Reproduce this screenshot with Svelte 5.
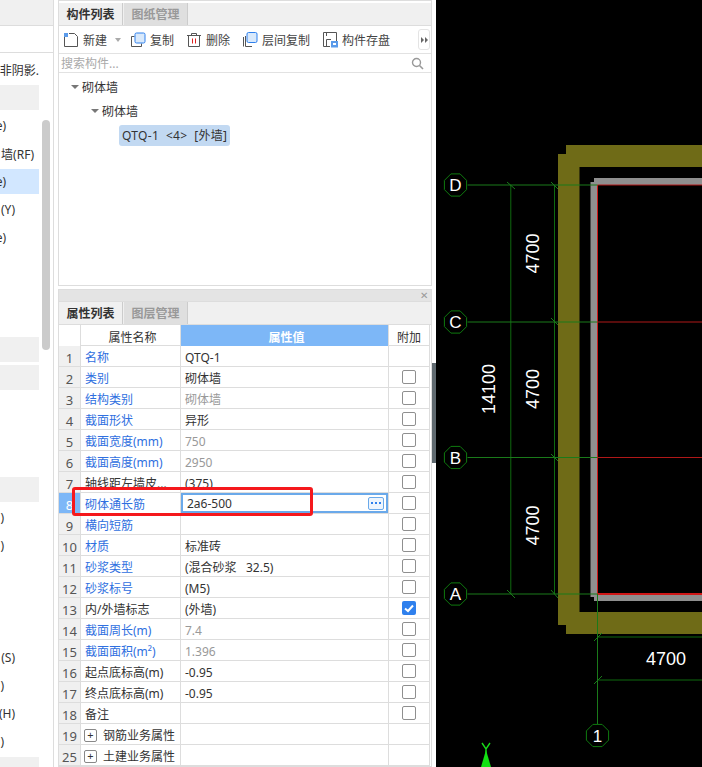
<script>
  const sideRows = [
    { k: 0, text: '非阴影.', pad: 0 },
    { k: 1, cls: 'stripe' },
    { k: 2, text: 'e)', pad: 33 },
    { k: 3, text: '墙(RF)', pad: 5 },
    { k: 4, text: 'e)', pad: 33, cls: 'picked' },
    { k: 5, text: '(Y)', pad: 24 },
    { k: 6, text: 'e)', pad: 33 },
    { k: 7 }, { k: 8 }, { k: 9 },
    { k: 10, cls: 'stripe' },
    { k: 11, cls: 'stripe' },
    { k: 12 }, { k: 13 }, { k: 14 },
    { k: 15, cls: 'stripe' },
    { k: 16, text: ')', pad: 35 },
    { k: 17, text: ')', pad: 35 },
    { k: 18 }, { k: 19 }, { k: 20 },
    { k: 21, text: '(S)', pad: 24 },
    { k: 22, text: ')', pad: 35 },
    { k: 23, text: '(H)', pad: 24 },
    { k: 24, text: ')', pad: 35 },
    { k: 25, cls: 'stripe' }
  ];

  const props = [
    { n: 1, name: '名称', blue: true, value: 'QTQ-1', noCheck: true },
    { n: 2, name: '类别', blue: true, value: '砌体墙' },
    { n: 3, name: '结构类别', blue: true, value: '砌体墙', grey: true },
    { n: 4, name: '截面形状', blue: true, value: '异形' },
    { n: 5, name: '截面宽度(mm)', blue: true, value: '750', grey: true },
    { n: 6, name: '截面高度(mm)', blue: true, value: '2950', grey: true },
    { n: 7, name: '轴线距左墙皮...', value: '(375)' },
    { n: 8, name: '砌体通长筋', blue: true, value: '2a6-500', editing: true },
    { n: 9, name: '横向短筋', blue: true, value: '' },
    { n: 10, name: '材质', blue: true, value: '标准砖' },
    { n: 11, name: '砂浆类型', blue: true, value: '(混合砂浆\u00a0\u00a0\u00a032.5)' },
    { n: 12, name: '砂浆标号', blue: true, value: '(M5)' },
    { n: 13, name: '内/外墙标志', value: '(外墙)', checked: true },
    { n: 14, name: '截面周长(m)', blue: true, value: '7.4', grey: true },
    { n: 15, name: '截面面积(m²)', blue: true, value: '1.396', grey: true },
    { n: 16, name: '起点底标高(m)', value: '-0.95' },
    { n: 17, name: '终点底标高(m)', value: '-0.95' },
    { n: 18, name: '备注', value: '' },
    { n: 19, name: '钢筋业务属性', group: true, noCheck: true },
    { n: 25, name: '土建业务属性', group: true, noCheck: true }
  ];

  const axes = [
    { id: 'D', y: 185 },
    { id: 'C', y: 322 },
    { id: 'B', y: 457.5 },
    { id: 'A', y: 594 }
  ];

  function octagon(cx, cy, r) {
    const pts = [];
    for (let i = 0; i < 8; i++) {
      const a = (Math.PI / 4) * i + Math.PI / 8;
      pts.push((cx + r * Math.cos(a)).toFixed(1) + ',' + (cy + r * Math.sin(a)).toFixed(1));
    }
    return pts.join(' ');
  }
</script>

<div class="page">
  <aside class="side">
    <div class="side-head"></div>
    <div class="side-bar"></div>
    <div class="side-list">
      {#each sideRows as row (row.k)}
        <div class="side-row {row.cls || ''}" style={row.text ? `padding-right:${row.pad}px` : ''}>{row.text || ''}</div>
      {/each}
    </div>
    <div class="side-scroll"></div>
  </aside>

  <main class="panels">
    <section class="panel list-panel">
      <div class="tabs">
        <div class="tab on">构件列表</div>
        <div class="tab">图纸管理</div>
      </div>
      <div class="toolbar">
        <span class="tool first">
          <svg width="16" height="16" viewBox="0 0 16 16"><path d="M1.5 3.5V14.5H14.5V4.5L11.5 1.5H6" fill="none" stroke="#555" /><rect x="1" y="1" width="4" height="4" fill="#5b9bea" /></svg>
          新建
          <i class="caret"></i>
        </span>
        <span class="tool">
          <svg width="16" height="16" viewBox="0 0 16 16"><path d="M4.5 4.5H1.5V14.5H11.5V11.5" fill="none" stroke="#555" /><rect x="5" y="1" width="10" height="10" rx="1.5" fill="#d9e9fb" stroke="#2f80ed" /></svg>
          复制
        </span>
        <span class="tool">
          <svg width="16" height="16" viewBox="0 0 16 16"><path d="M1 3.5H15M5.5 3V1.5H10.5V3M2.5 3.5V14.5H13.5V3.5" fill="none" stroke="#555" /><path d="M6.5 6.5V11.5M9.5 6.5V11.5" stroke="#e02020" /></svg>
          删除
        </span>
        <span class="tool">
          <svg width="16" height="16" viewBox="0 0 16 16"><path d="M1.5 5V14.5M3.5 4V14.5H10" fill="none" stroke="#555" /><rect x="5" y="0.5" width="10" height="10" rx="1.5" fill="#d9e9fb" stroke="#2f80ed" /></svg>
          层间复制
        </span>
        <span class="tool">
          <svg width="16" height="16" viewBox="0 0 16 16"><path d="M8 14.5H1.5V0.5H14.5V9M4.5 14V7.5H9M4.5 1V4" fill="none" stroke="#555" /><rect x="9" y="9" width="7" height="6.5" fill="#5b9bea" /><rect x="11" y="11" width="3" height="2" fill="#fff" /></svg>
          构件存盘
        </span>
        <span class="more"><i></i><i></i></span>
      </div>
      <div class="search">
        <span>搜索构件...</span>
        <svg width="13" height="13" viewBox="0 0 13 13"><circle cx="5.5" cy="5.5" r="4" fill="none" stroke="#999" stroke-width="1.4" /><path d="M8.5 8.5L12 12" stroke="#999" stroke-width="1.6" /></svg>
      </div>
      <div class="tree">
        <div class="node"><i class="caret dark"></i>砌体墙</div>
        <div class="node lvl2"><i class="caret dark"></i>砌体墙</div>
        <div class="node lvl3"><span class="leaf">QTQ-1&nbsp;&nbsp;&lt;4&gt;&nbsp;&nbsp;[外墙]</span></div>
      </div>
    </section>

    <section class="panel prop-panel">
      <div class="prop-title"><span class="close">✕</span></div>
      <div class="tabs">
        <div class="tab on">属性列表</div>
        <div class="tab">图层管理</div>
      </div>
      <div class="table">
        <div class="tr head">
          <div class="idx blank"></div>
          <div class="name">属性名称</div>
          <div class="val">属性值</div>
          <div class="add">附加</div>
        </div>
        {#each props as p (p.n)}
          <div class="tr" class:editing={p.editing}>
            <div class="idx">{p.n}</div>
            <div class="name" class:blue={p.blue}>
              {#if p.group}<span class="plus">+</span>{/if}{p.name}
            </div>
            <div class="val" class:grey={p.grey}>
              {#if p.editing}
                <span class="input"><span class="input-text">{p.value}</span>
                  <span class="dots">
                    <svg width="14" height="11" viewBox="0 0 14 11"><path d="M2 4h2v2H2zM6 4h2v2H6zM10 4h2v2h-2z" fill="#2f80ed" /></svg>
                  </span>
                </span>
              {:else}
                {p.value || ''}
              {/if}
            </div>
            <div class="add">
              {#if !p.noCheck}
                <span class="check" class:checked={p.checked}>
                  {#if p.checked}
                    <svg width="14" height="14" viewBox="0 0 14 14"><path d="M3 7.5L6 10L11 4.5" fill="none" stroke="#fff" stroke-width="2" /></svg>
                  {/if}
                </span>
              {/if}
            </div>
          </div>
        {/each}
        <div class="red-box"></div>
      </div>
    </section>
  </main>

  <div class="splitter"><div class="handle"></div></div>

  <svg class="cad" width="266" height="767" viewBox="436 0 266 767">
    <path d="M566 145H702V167H579.5V612H702V634H566V625H558V154H566Z" fill="#6f6b17" />
    <path d="M594 178H702V185H597.5V594H702V601H594V597H590.5V182H594Z" fill="#8f8f8f" />
    <path d="M597.5 185V594" stroke="#d01818" stroke-width="1" />
    <path d="M597.5 185H702M597.5 322H702M597.5 457.5H702" stroke="#b01818" stroke-width="1" />
    <path d="M597.5 594H702" stroke="#d01818" stroke-width="2" />

    <path d="M510.8 185V594M554.5 185V594M597.5 637H702M597.5 680H702" stroke="#0f6a0f" stroke-width="1" />
    <path d="M507 182L515 189M551 182L558 189M551 318L558 325M551 454L558 461M507 590L515 598M551 590L558 598M594 641L602 633M594 684L602 676" stroke="#1a7a1a" stroke-width="1" />

    {#each axes as a (a.id)}
      <path d="M467.5 {a.y}H597.5" stroke="#1a7a1a" stroke-width="1" />
      <polygon points={octagon(455.5, a.y, 12)} fill="none" stroke="#0f7a0f" />
      <text class="axis-id" x="455.5" y={a.y + 6}>{a.id}</text>
    {/each}
    <path d="M597.5 594V724" stroke="#1a7a1a" stroke-width="1" />
    <polygon points={octagon(597.5, 735.5, 12)} fill="none" stroke="#0f7a0f" />
    <text class="axis-id" x="597.5" y="741.5">1</text>

    <text class="dim" transform="translate(539 253.5) rotate(-90)">4700</text>
    <text class="dim" transform="translate(539 389) rotate(-90)">4700</text>
    <text class="dim" transform="translate(539 525.5) rotate(-90)">4700</text>
    <text class="dim" transform="translate(495 389) rotate(-90)">14100</text>
    <text class="dim" x="666" y="665">4700</text>

    <path d="M482 743L486 749L490 743M486 749V756" fill="none" stroke="#18d818" stroke-width="1.4" />
    <polygon points="486,750 491,767 481,767" fill="#12e012" />
  </svg>
</div>

<style>
  :global(body) {
    margin: 0;
    background: #fff;
  }

  .page {
    display: flex;
    width: 702px;
    height: 767px;
    overflow: hidden;
    font-family: "Noto Sans", "Noto Sans CJK SC", sans-serif;
    font-size: 12px;
    color: #333;
    background: #fff;
  }

  /* left list, cut off by the window edge */
  .side {
    position: relative;
    flex: none;
    width: 53px;
    border-right: 1px solid #ddd;
  }

  .side-head {
    height: 25px;
    background: #f0f0f0;
    border-bottom: 1px solid #ddd;
  }

  .side-bar {
    height: 26px;
    border-bottom: 1px solid #ddd;
  }

  .side-list {
    display: flex;
    flex-direction: column;
    gap: 3px;
    width: 39px;
    margin-top: 4px;
  }

  .side-row {
    display: flex;
    flex: none;
    justify-content: flex-end;
    align-items: center;
    height: 25px;
    overflow: hidden;
    white-space: nowrap;
  }

  .stripe {
    background: #f0f0f0;
  }

  .picked {
    background: #d2e7ff;
  }

  .side-scroll {
    position: absolute;
    left: 42px;
    top: 120px;
    width: 8px;
    height: 230px;
    border-radius: 4px;
    background: #cbcbcb;
  }

  .panels {
    display: flex;
    flex: none;
    flex-direction: column;
    gap: 3px;
    width: 374px;
    margin-left: 4px;
  }

  .panel {
    border: 1px solid #ddd;
    border-top: 0;
    box-sizing: border-box;
  }

  .list-panel {
    height: 288px;
    padding-top: 2px;
    border-top: 1px solid #ddd;
  }

  .tabs {
    display: flex;
    height: 23px;
    box-sizing: border-box;
    background: #f0f0f0;
    border-bottom: 1px solid #ddd;
  }

  .tab {
    width: 64px;
    height: 22px;
    margin-right: 1px;
    line-height: 24px;
    text-align: center;
    font-weight: 700;
    color: #999;
    background: #dfdfdf;
    border-right: 1px solid #ccc;
    box-sizing: border-box;
  }

  .tab.on {
    color: #333;
    background: #f0f0f0;
  }

  .toolbar {
    display: flex;
    align-items: center;
    height: 28px;
    box-sizing: border-box;
    padding-left: 4px;
    border-bottom: 1px solid #e2e2e2;
    color: #444;
    position: relative;
  }

  .tool {
    display: flex;
    align-items: center;
    gap: 4px;
    margin-right: 12px;
    white-space: nowrap;
  }

  .tool.first {
    margin-right: 9px;
  }

  .caret {
    display: inline-block;
    width: 0;
    height: 0;
    margin-left: 4px;
    border: 3px solid transparent;
    border-top: 4px solid #aaa;
    border-bottom: 0;
  }

  .caret.dark {
    margin: 0 3px 0 0;
    border-left-width: 4px;
    border-right-width: 4px;
    border-top-color: #777;
  }

  .more {
    position: absolute;
    right: 1px;
    top: 3px;
    display: flex;
    align-items: center;
    justify-content: center;
    gap: 1px;
    width: 10px;
    height: 19px;
    border: 1px solid #e4e4e4;
    border-radius: 3px;
    background: #fff;
  }

  .more i {
    width: 0;
    height: 0;
    border: 3px solid transparent;
    border-left: 3px solid #666;
    border-right: 0;
  }

  .search {
    display: flex;
    align-items: center;
    justify-content: space-between;
    height: 19px;
    box-sizing: border-box;
    padding: 0 7px 0 2px;
    border-bottom: 1px solid #e2e2e2;
    color: #aaa;
  }

  .tree {
    padding-top: 2px;
  }

  .node {
    display: flex;
    align-items: center;
    height: 24px;
    padding-left: 12px;
  }

  .lvl2 {
    padding-left: 32px;
  }

  .lvl3 {
    padding-left: 60px;
  }

  .leaf {
    height: 21px;
    padding: 0 3px;
    line-height: 21px;
    letter-spacing: 0.3px;
    border-radius: 3px;
    background: #c2d9f2;
    white-space: nowrap;
  }

  .prop-panel {
    position: relative;
    flex: 1;
    border-top: 1px solid #ddd;
  }

  .prop-title {
    position: relative;
    height: 11px;
    background: #e4e4e4;
    border-bottom: 1px solid #ddd;
  }

  .close {
    position: absolute;
    right: 3px;
    top: -2px;
    font-size: 10px;
    line-height: 14px;
    color: #999;
  }

  .table {
    position: relative;
    width: 371px;
  }

  .tr {
    display: grid;
    grid-template-columns: 22px 100px 208px 41px;
    height: 21px;
    box-sizing: border-box;
    border-bottom: 1px solid #ddd;
    line-height: 24px;
  }

  .tr > div {
    white-space: nowrap;
    overflow: hidden;
  }

  .idx {
    text-align: center;
    color: #555;
    background: #f0f0f0;
    border-right: 1px solid #ddd;
    font-size: 13px;
  }

  .idx.blank {
    background: #fff;
  }

  .editing .idx {
    color: #fff;
    background: #7db7f7;
  }

  .name {
    padding-left: 4px;
    border-right: 1px solid #ddd;
  }

  .blue {
    color: #2f6fe0;
  }

  .val {
    padding-left: 4px;
    border-right: 1px solid #ddd;
  }

  .grey {
    color: #999;
  }

  .add {
    text-align: center;
    border-right: 1px solid #ddd;
  }

  .head {
    height: 21px;
    border-bottom: 0;
    line-height: 25px;
  }

  .head .name {
    text-align: center;
    border-bottom: 1px solid #ddd;
  }

  .head .val {
    text-align: center;
    font-weight: 700;
    color: #fff;
    background: #7db7f7;
  }

  .head .add {
    border-bottom: 1px solid #ddd;
  }

  .editing .val {
    padding: 0;
  }

  .input {
    display: flex;
    align-items: center;
    justify-content: space-between;
    height: 20px;
    padding: 0 2px 0 4px;
    box-sizing: border-box;
    border: 2px solid #6aa9ea;
    color: #333;
  }

  .input-text {
    position: relative;
    top: 1px;
    line-height: 16px;
  }

  .dots {
    display: block;
    width: 14px;
    height: 11px;
    border: 1px solid #6aa9ea;
    border-radius: 2px;
    background: #eef5fd;
  }

  .dots svg {
    display: block;
  }

  .check {
    display: inline-block;
    width: 14px;
    height: 14px;
    margin-top: 3px;
    box-sizing: border-box;
    border: 1px solid #8f8f8f;
    border-radius: 2px;
    background: #fff;
    vertical-align: top;
  }

  .check.checked {
    border: 0;
    background: #2f80ed;
  }

  .check svg {
    display: block;
  }

  .plus {
    display: inline-block;
    width: 11px;
    height: 11px;
    margin: 0 6px 0 -1px;
    line-height: 10px;
    text-align: center;
    font-size: 11px;
    border: 1px solid #888;
    border-radius: 2px;
    vertical-align: 1px;
  }

  .red-box {
    position: absolute;
    left: 13px;
    top: 162px;
    width: 241px;
    height: 29px;
    box-sizing: border-box;
    border: 3px solid #f5181c;
    border-radius: 3px;
  }

  .splitter {
    position: relative;
    flex: none;
    width: 4px;
  }

  .handle {
    position: absolute;
    left: 0;
    top: 363px;
    width: 4px;
    height: 100px;
    background: #606a70;
  }

  .cad {
    display: block;
    flex: none;
    background: #000;
  }

  .axis-id {
    font-family: "Liberation Sans", sans-serif;
    font-size: 17px;
    fill: #fff;
    text-anchor: middle;
  }

  .dim {
    font-family: "Liberation Sans", sans-serif;
    font-size: 18px;
    fill: #fff;
    text-anchor: middle;
  }
</style>
